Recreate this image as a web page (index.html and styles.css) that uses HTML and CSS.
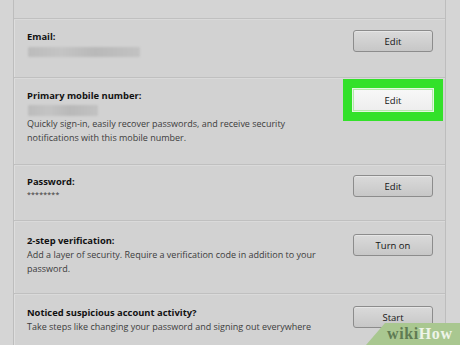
FILE: index.html
```html
<!DOCTYPE html>
<html>
<head>
<meta charset="utf-8">
<link rel="stylesheet" href="styles.css">
</head>
<body>
<div class="page">
  <div class="panel">
    <div class="top"></div>
    <div class="row row-email">
      <div class="info">
        <div class="label">Email:</div>
        <div class="blur blur-email"></div>
      </div>
      <button class="btn">Edit</button>
    </div>
    <div class="row row-mobile">
      <div class="info">
        <div class="label">Primary mobile number:</div>
        <div class="blur blur-phone"></div>
        <p class="desc">Quickly sign-in, easily recover passwords, and receive security notifications with this mobile number.</p>
      </div>
      <button class="btn btn-hl">Edit</button>
    </div>
    <div class="row row-pass">
      <div class="info">
        <div class="label">Password:</div>
        <div class="stars">********</div>
      </div>
      <button class="btn">Edit</button>
    </div>
    <div class="row row-2step">
      <div class="info">
        <div class="label">2-step verification:</div>
        <p class="desc">Add a layer of security. Require a verification code in addition to your password.</p>
      </div>
      <button class="btn">Turn on</button>
    </div>
    <div class="row row-sus">
      <div class="info">
        <div class="label">Noticed suspicious account activity?</div>
        <p class="desc">Take steps like changing your password and signing out everywhere</p>
      </div>
      <button class="btn">Start</button>
    </div>
  </div>
  <div class="wm"><span class="wm-wiki">wiki</span><span class="wm-how">How</span></div>
</div>
</body>
</html>
```
FILE: styles.css
```css
* { box-sizing: border-box; }
html, body { margin: 0; padding: 0; }
body { background: #d3d3d3; }
.page {
  position: relative;
  width: 460px;
  height: 345px;
  overflow: hidden;
  background: #d5d5d5;
  font-family: "Open Sans", "Noto Sans", sans-serif;
  color: #141414;
}
.panel {
  margin-left: 13px;
  width: 433px;
  height: 345px;
  background: #d2d2d2;
  border-left: 1px solid #bdbdbd;
  border-right: 1px solid #bdbdbd;
  box-shadow: inset 1px 0 0 #dedede;
}
.top { height: 18px; background: #d4d4d4; }
.row {
  display: flex;
  align-items: flex-start;
  justify-content: space-between;
  padding: 11px 12px 18px 13px;
  border-top: 1px solid #c0c0c0;
  box-shadow: inset 0 1px 0 #dadada;
}
.row-email { height: 59px; padding-top: 11px; }
.row-mobile { height: 87px; padding-top: 11px; }
.row-pass { height: 56px; padding-top: 10px; }
.row-2step { height: 73px; padding-top: 13px; }
.row-sus { padding-top: 12px; }
.info { display: flex; flex-direction: column; }
.label {
  font-weight: 700;
  font-size: 9.4px;
  line-height: 14px;
  color: #111;
}
.desc {
  margin: 0;
  font-size: 9px;
  line-height: 14px;
  color: #3c3c3c;
  width: 300px;
}
.blur {
  margin-top: 3px;
  height: 10px;
  background: linear-gradient(90deg, #bcbcbc, #c4c4c4 30%, #b9b9b9 60%, #c2c2c2);
  filter: blur(1.2px);
  border-radius: 1px;
}
.blur-email { width: 112px; margin-bottom: 1px; margin-left: 1px; }
.blur-phone { width: 70px; margin-left: 1px; margin-bottom: 1px; margin-top: 2px; height: 11px; }
.stars {
  font-size: 7px;
  line-height: 10px;
  letter-spacing: 0.2px;
  color: #333;
  margin-top: 1px;
}
.btn {
  width: 80px;
  height: 22px;
  margin: 0;
  padding: 0;
  border: 1px solid #8c8c8c;
  border-radius: 3px;
  background: linear-gradient(#dadada, #c7c7c7);
  box-shadow: inset 0 1px 0 #e6e6e6;
  font-family: "Open Sans", "Noto Sans", sans-serif;
  font-size: 9.5px;
  color: #151515;
  flex: none;
}
.btn-hl {
  border-radius: 0;
  background: linear-gradient(#f8f8f8, #eeeeee);
  border: 1px solid #b4e8ac;
  box-shadow: 0 0 0 1px #e4f7e0, 0 0 0 10px #33e12a;
}
.wm {
  position: absolute;
  right: 0;
  bottom: 0;
  width: 94px;
  height: 22px;
  background: #a9c790;
  clip-path: polygon(19px 0, 100% 0, 100% 100%, 0 100%);
  font-family: "Liberation Serif", "DejaVu Serif", serif;
  font-weight: 700;
  font-size: 16px;
  line-height: 22px;
  padding-left: 21px;
  letter-spacing: 0.6px;
  white-space: nowrap;
}
.wm-wiki { color: #5f7b53; }
.wm-how { color: #eef4e8; }
```
